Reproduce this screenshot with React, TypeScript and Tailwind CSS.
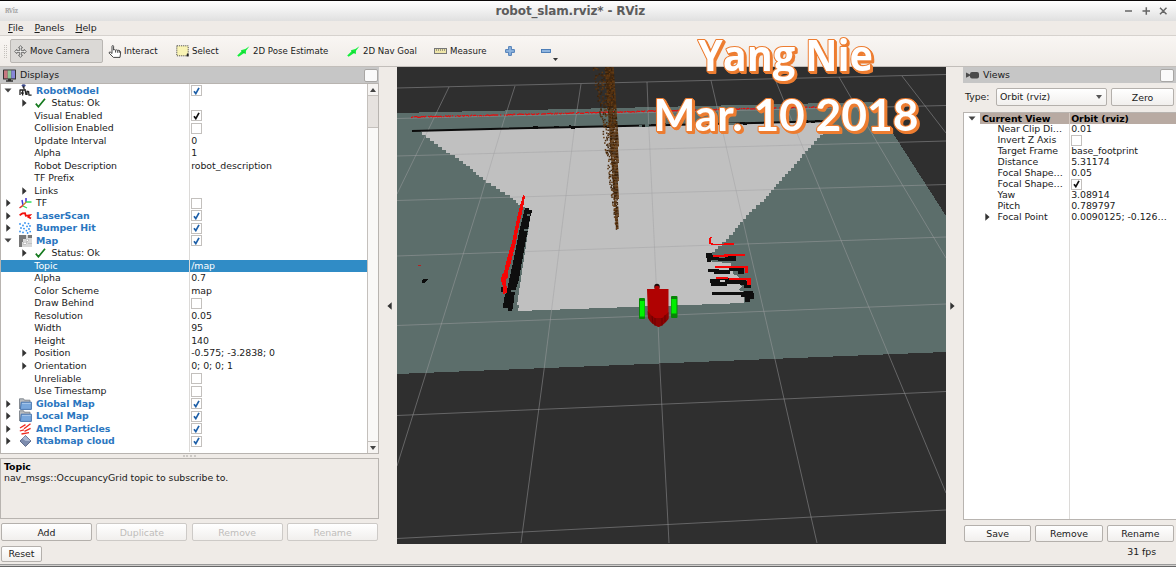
import React from "react";

type Pt = [number, number];

/* ---------- small shared pieces ---------- */

const Check = ({ on, color = "#1d5fa8" }: { on: boolean; color?: string }) => (
  <span className="flex h-[11px] w-[11px] shrink-0 items-center justify-center border border-[#c3c0bd] bg-white">
    {on && (
      <svg width="7" height="8" viewBox="0 0 7 8">
        <path d="M1 4.2 L2.8 6.6 L6 0.8" fill="none" stroke={color} strokeWidth="1.7" />
      </svg>
    )}
  </span>
);

const Right = () => (
  <svg width="5" height="8" viewBox="0 0 5 8" className="shrink-0">
    <path d="M0.3 0.3 L4.6 4 L0.3 7.7 Z" fill="#333" />
  </svg>
);

const Down = () => (
  <svg width="8" height="5" viewBox="0 0 8 5" className="shrink-0">
    <path d="M0.5 0.4 L7.5 0.4 L4 4.6 Z" fill="#444" />
  </svg>
);

const Btn = ({ label, className = "", off = false }: { label: string; className?: string; off?: boolean }) => (
  <button
    className={
      "rounded-[2px] border bg-gradient-to-b from-white to-[#f1efed] text-center leading-[15px] " +
      (off ? "border-[#cdcac7] text-[#bfbdbb] " : "border-[#b4b0ac] text-[#1a1a1a] ") +
      className
    }
  >
    {label}
  </button>
);

/* ---------- icons ---------- */

const MoveIcon = () => (
  <svg width="13" height="13" viewBox="0 0 13 13" fill="#f2f2f0" stroke="#555" strokeWidth="0.8">
    <path d="M6.5 0.6 L8.5 2.8 H7.3 V5.6 H10.2 V4.4 L12.4 6.5 L10.2 8.6 V7.4 H7.3 V10.2 H8.5 L6.5 12.4 L4.5 10.2 H5.7 V7.4 H2.8 V8.6 L0.6 6.5 L2.8 4.4 V5.6 H5.7 V2.8 H4.5 Z" />
  </svg>
);
const HandIcon = () => (
  <svg width="14" height="13" viewBox="0 0 14 13" fill="#fff" stroke="#333" strokeWidth="0.9">
    <path d="M4 8.5 V1.4 Q4 0.6 4.8 0.6 T5.6 1.4 V5 Q6.6 4.2 7.6 5.2 Q8.7 4.4 9.7 5.4 Q11 4.8 12 6 Q12.8 6.6 12.6 8 L12 12.4 H5.4 L1.2 8.2 Q0.8 6.8 2.2 7 Z" />
    <path d="M7.6 5.4 V7.6 M9.7 5.6 V7.8 M11.3 6 V7.8" />
  </svg>
);
const SelectIcon = () => (
  <svg width="14" height="12" viewBox="0 0 14 12">
    <rect x="0.8" y="0.8" width="11.4" height="10" fill="#f9f3b4" stroke="#444" strokeWidth="0.9" strokeDasharray="1.2 0.9" />
    <path d="M11 8.2 L12.6 9 V11.4 L10.4 11.2 Z" fill="#222" />
  </svg>
);
const GreenArrow = () => (
  <svg width="13" height="11" viewBox="0 0 13 11">
    <path d="M0.2 9.4 L4.6 5.2 L3.8 4.2 L8.4 3 L12.4 0.2 L9 4.8 L8.8 8.2 L7.2 7 L1.6 10.8 Z" fill="#14ee3c" />
    <path d="M4.6 5.4 L7.8 7" stroke="#10b830" strokeWidth="0.8" />
  </svg>
);
const RulerIcon = () => (
  <svg width="13" height="6" viewBox="0 0 13 6">
    <rect x="0.5" y="0.5" width="12" height="5" fill="#efe6a9" stroke="#777" />
    <path d="M2.5 1 V3 M4.5 1 V3 M6.5 1 V3 M8.5 1 V3 M10.5 1 V3" stroke="#666" strokeWidth="0.6" />
  </svg>
);
const PlusIcon = () => (
  <svg width="10" height="10" viewBox="0 0 10 10">
    <path d="M3.6 0.6 H6.4 V3.6 H9.4 V6.4 H6.4 V9.4 H3.6 V6.4 H0.6 V3.6 H3.6 Z" fill="#8fb4de" stroke="#4375b2" strokeWidth="0.9" />
  </svg>
);
const MinusIcon = () => (
  <svg width="10" height="4" viewBox="0 0 10 4">
    <rect x="0.5" y="0.5" width="9" height="3" fill="#8fb4de" stroke="#4375b2" strokeWidth="0.9" />
  </svg>
);
const MonitorIcon = () => (
  <svg width="13" height="13" viewBox="0 0 13 13">
    <rect x="0" y="0.5" width="13" height="10" rx="0.6" fill="#333" />
    <rect x="1" y="1.4" width="3.7" height="8" fill="#c67880" />
    <rect x="4.7" y="1.4" width="3.6" height="8" fill="#8fc694" />
    <rect x="8.3" y="1.4" width="3.7" height="8" fill="#8686d8" />
    <path d="M5 10 H8 V11.3 H10 V12.7 H3 V11.3 H5 Z" fill="#333" />
  </svg>
);
const CameraIcon = () => (
  <svg width="13" height="8" viewBox="0 0 13 8" fill="#4a4a4a">
    <path d="M0 1.4 L4 3.4 V4.8 L0 6.8 Z" />
    <rect x="4" y="1" width="9" height="6.4" rx="2" />
  </svg>
);
const RobotIcon = () => (
  <svg width="13" height="13" viewBox="0 0 13 13">
    <ellipse cx="4.6" cy="1.6" rx="2" ry="1.3" fill="#3c4a8c" />
    <path d="M3.6 3 L4.8 3 L5 5 M1 5.5 V11 M1 6 H6 M3.6 6 V11.5 M6 5 L7 11 M8 7 V11 M7.5 7.2 L9.6 7.6 L10 11.2 L12.6 11.2 M2 9 H5" stroke="#222" strokeWidth="1.3" fill="none" />
    <path d="M4.8 7 V9.5" stroke="#aaa" strokeWidth="0.8" />
  </svg>
);
const TfIcon = () => (
  <svg width="13" height="12" viewBox="0 0 13 12" fill="none">
    <path d="M3 3 L4 8 M7 1 V5" stroke="#4338d8" strokeWidth="1.5" />
    <path d="M7 5 H12.5 M4 9 L8 11" stroke="#2ee05a" strokeWidth="1.3" />
    <path d="M0.5 11 L4 8.4" stroke="#e0332c" strokeWidth="1.5" />
    <path d="M4 8.4 L7.2 5" stroke="#d08020" strokeWidth="1.3" />
  </svg>
);
const LaserIcon = () => (
  <svg width="13" height="9" viewBox="0 0 13 9">
    <path d="M0.6 4.2 L3.4 2.4 L6 2.2 L6.8 4.8 L11 4.2 L9.4 6 L12 7.6" stroke="#f2100c" strokeWidth="1.8" fill="none" />
  </svg>
);
const PointsIcon = () => (
  <svg width="13" height="12" viewBox="0 0 13 12" fill="#3491f0">
    {[[1, 2], [4, 3.5], [6, 1], [9.5, 1.6], [11, 4], [8, 4.4], [2, 6], [5, 6.6], [1, 9.5], [4, 10.4], [7.4, 8.6], [10, 7], [11.2, 9.6], [8.6, 11]].map(([x, y], i) => (
      <circle key={i} cx={x} cy={y} r="0.9" />
    ))}
  </svg>
);
const MapIcon = () => (
  <svg width="13" height="12" viewBox="0 0 13 12" shapeRendering="crispEdges">
    <rect width="13" height="12" fill="#d8d8d8" />
    <path d="M0 0 H7 V4 H4 V7 H3 V12 H0 Z M9 0 H13 V3 H9 Z" fill="#777" />
    <path d="M7 4 H9 V6 H7 Z M4 7 H7 V9 H4 Z M9 8 H13" fill="#fff" stroke="#aaa" strokeWidth="0.5" />
  </svg>
);
const FolderIcon = () => (
  <svg width="13" height="12" viewBox="0 0 13 12">
    <path d="M0.5 11 V0.8 H4.6 L5.4 2.2 H11 V4" fill="#b9bcc0" stroke="#7c828a" strokeWidth="0.9" />
    <path d="M2.2 4.2 H12.4 V11.4 H1.4 Z" fill="#79a7dc" stroke="#3f6da8" strokeWidth="0.9" />
    <path d="M3 5.4 H11.8" stroke="#b7d2f0" strokeWidth="0.8" />
  </svg>
);
const ParticlesIcon = () => (
  <svg width="13" height="12" viewBox="0 0 13 12" stroke="#ee2a20" strokeWidth="1.3">
    <path d="M1 5 L6.5 1.6 M5 5.8 L11.5 0.8 M0.8 8 L5 6.8 M5.5 8.4 L11.6 5.4 M2.5 11 L10 9.6" />
  </svg>
);
const CubeIcon = () => (
  <svg width="13" height="12" viewBox="0 0 13 12">
    <path d="M6.5 0.5 L12 6 L6.5 11.5 L1 6 Z" fill="#7c8cae" stroke="#4b5878" strokeWidth="0.8" />
    <path d="M6.5 0.8 L11.5 6 H6.5 L3.5 3.6 Z" fill="#a9b5d0" />
  </svg>
);

/* ---------- displays tree ---------- */

type Row = {
  label: string;
  kind: "root" | "status" | "prop" | "group";
  open?: boolean;
  icon?: React.ReactNode;
  value?: string;
  check?: boolean;
  plain?: boolean;
  selected?: boolean;
};

const rows: Row[] = [
  { label: "RobotModel", kind: "root", open: true, icon: <RobotIcon />, check: true },
  { label: "Status: Ok", kind: "status" },
  { label: "Visual Enabled", kind: "prop", check: true },
  { label: "Collision Enabled", kind: "prop", check: false },
  { label: "Update Interval", kind: "prop", value: "0" },
  { label: "Alpha", kind: "prop", value: "1" },
  { label: "Robot Description", kind: "prop", value: "robot_description" },
  { label: "TF Prefix", kind: "prop" },
  { label: "Links", kind: "group" },
  { label: "TF", kind: "root", icon: <TfIcon />, check: false, plain: true },
  { label: "LaserScan", kind: "root", icon: <LaserIcon />, check: true },
  { label: "Bumper Hit", kind: "root", icon: <PointsIcon />, check: true },
  { label: "Map", kind: "root", open: true, icon: <MapIcon />, check: true },
  { label: "Status: Ok", kind: "status" },
  { label: "Topic", kind: "prop", value: "/map", selected: true },
  { label: "Alpha", kind: "prop", value: "0.7" },
  { label: "Color Scheme", kind: "prop", value: "map" },
  { label: "Draw Behind", kind: "prop", check: false },
  { label: "Resolution", kind: "prop", value: "0.05" },
  { label: "Width", kind: "prop", value: "95" },
  { label: "Height", kind: "prop", value: "140" },
  { label: "Position", kind: "group", value: "-0.575; -3.2838; 0" },
  { label: "Orientation", kind: "group", value: "0; 0; 0; 1" },
  { label: "Unreliable", kind: "prop", check: false },
  { label: "Use Timestamp", kind: "prop", check: false },
  { label: "Global Map", kind: "root", icon: <FolderIcon />, check: true },
  { label: "Local Map", kind: "root", icon: <FolderIcon />, check: true },
  { label: "Amcl Particles", kind: "root", icon: <ParticlesIcon />, check: true },
  { label: "Rtabmap cloud", kind: "root", icon: <CubeIcon />, check: true },
];

const TreeRow = ({ r }: { r: Row }) => (
  <div className={"flex h-[12.52px] items-center " + (r.selected ? "bg-[#308cc6] text-white" : "text-[#1a1a1a]")}>
    <div className="flex h-full w-[189px] items-center border-r border-[#dcdad8]">
      {r.kind === "root" && (
        <>
          <span className="flex w-[18px] pl-[3px]">{r.open ? <Down /> : <span className="pl-[2px]"><Right /></span>}</span>
          <span className="flex w-[17px] items-center">{r.icon}</span>
          <span className={r.plain ? "" : "font-bold text-[#2a76c0]"}>{r.label}</span>
        </>
      )}
      {r.kind === "status" && (
        <>
          <span className="flex w-[34px] pl-[21px]"><Right /></span>
          <span className="w-[16.5px]">
            <svg width="11" height="10" viewBox="0 0 11 10">
              <path d="M0.8 5.6 L3.4 8.8 L10 0.8" fill="none" stroke="#157a1e" strokeWidth="1.7" />
            </svg>
          </span>
          <span>{r.label}</span>
        </>
      )}
      {r.kind === "group" && (
        <>
          <span className="flex w-[33.3px] pl-[21px]"><Right /></span>
          <span>{r.label}</span>
        </>
      )}
      {r.kind === "prop" && <span className="pl-[33.3px]">{r.label}</span>}
    </div>
    <div className="flex items-center whitespace-nowrap pl-[1.2px]">
      {r.check !== undefined && <Check on={r.check} color={r.kind === "root" ? "#1d5fa8" : "#111"} />}
      {r.value}
    </div>
  </div>
);

/* ---------- views tree ---------- */

const views: { label: string; value?: string; check?: boolean; arrow?: boolean }[] = [
  { label: "Near Clip Di…", value: "0.01" },
  { label: "Invert Z Axis", check: false },
  { label: "Target Frame", value: "base_footprint" },
  { label: "Distance", value: "5.31174" },
  { label: "Focal Shape…", value: "0.05" },
  { label: "Focal Shape…", check: true },
  { label: "Yaw", value: "3.08914" },
  { label: "Pitch", value: "0.789797" },
  { label: "Focal Point", value: "0.0090125; -0.126…", arrow: true },
];

/* ---------- 3D scene ---------- */

const rng = (seed: number) => () => {
  seed = (seed * 1664525 + 1013904223) % 4294967296;
  return seed / 4294967296;
};

const stairs = (pts: Pt[], step: number): Pt[] => {
  const out: Pt[] = [];
  for (let i = 0; i < pts.length - 1; i++) {
    const [x0, y0] = pts[i];
    const [x1, y1] = pts[i + 1];
    const n = Math.max(1, Math.round(Math.abs(y1 - y0) / step));
    for (let k = 0; k < n; k++) {
      const xa = x0 + ((x1 - x0) * k) / n;
      const xb = x0 + ((x1 - x0) * (k + 1)) / n;
      const y = y0 + ((y1 - y0) * k) / n;
      out.push([xa, y], [xb, y]);
    }
  }
  out.push(pts[pts.length - 1]);
  return out;
};

const toPoints = (p: Pt[]) => p.map(([x, y]) => `${x.toFixed(1)},${y.toFixed(1)}`).join(" ");

const freeSpace: Pt[] = [
  [420, 131],
  [832, 122],
  ...stairs([[826, 131], [823, 135], [808, 151], [791, 171], [776, 187], [764, 202], [752, 212], [740, 225], [733, 235], [718, 249], [709, 257]], 3.2),
  [712, 262],
  [731, 263],
  [733, 274],
  [738, 276],
  [742, 287],
  [738, 290],
  [744, 292],
  [744, 303],
  [518, 311],
  [519, 305],
  [517, 305],
  [531, 212],
  ...stairs([[521, 205], [510, 195], [486, 180], [463, 161], [442, 147], [422, 132]], 2.8),
];

const gridLines: Pt[][] = [
  [[397, 88], [664, 81.5], [946, 74.5]],
  [[397, 118.5], [946, 105.5]],
  [[397, 156], [672, 148.5], [946, 141]],
  [[397, 200.5], [672, 192.5], [946, 184.5]],
  [[397, 256], [672, 246.5], [946, 237]],
  [[397, 325.5], [672, 315], [946, 304]],
  [[397, 415.5], [784, 399], [946, 391.5]],
  [[397, 538.5], [784, 518.5], [946, 510]],
  [[449, 87], [433, 120], [397, 194]],
  [[515, 86], [504, 120], [481, 197], [427, 370], [397, 466]],
  [[581, 84], [575.5, 120], [544, 370], [521, 543]],
  [[647, 82], [648.5, 120], [657, 300], [660, 370], [669, 543]],
  [[711, 80.5], [724, 137], [748, 243], [777, 368], [817, 543]],
  [[775, 79], [799, 138], [843, 245], [895, 370], [946, 493]],
  [[839, 77], [871, 132], [903, 186], [946, 258]],
  [[902, 76], [946, 133]],
];

const Scene = () => {
  const r = rng(7);
  const cloud: { x: number; y: number; c: string }[] = [];
  const tones = ["#59330f", "#48290d", "#643b12", "#3a220b"];
  for (let y = 67; y < 229; y += 1.5) {
    const t = (y - 67) / 162;
    const right = y < 130 ? 613 + (y - 67) * 0.07 : 617.5;
    const solid = 605 + t * 11;
    const left = y < 120 ? 592 + (y - 67) * 0.16 : 600.5 + ((y - 120) / 108) * 15;
    for (let x = left; x < solid; x += 1.6)
      if (r() < 0.3 + t * 0.35) cloud.push({ x: x + r(), y: y + r(), c: tones[Math.floor(r() * 4)] });
    for (let x = solid; x < right; x += 1.2)
      if (r() < 0.96) cloud.push({ x, y, c: tones[Math.floor(r() * 4)] });
  }
  const scan: Pt[] = [];
  for (let x = 411; x < 830; x += 1) {
    if (r() < 0.8) scan.push([x, 116.6 - ((x - 411) / 419) * 10.4 + (r() - 0.5) * 1]);
  }
  const wall: { x: number; y: number; w: number; h: number }[] = [];
  for (let i = 0; i < 26; i++) {
    const x = 500 + r() * 335;
    wall.push({ x, y: 130.5 - ((x - 412) / 420) * 10 - r() * 1.5, w: 2 + r() * 4, h: 2.2 });
  }
  return (
    <svg width="549" height="477" viewBox="397 67 549 477" className="block" shapeRendering="crispEdges">
      <rect x="397" y="67" width="549" height="477" fill="#2f2f2f" />
      <polygon points="397,113 873,102 946,216 946,352 397,374" fill="#5c6e6b" />
      <polygon points={toPoints(freeSpace)} fill="#c0c0c0" />
      <g shapeRendering="auto" fill="none" stroke="#a0a0a4" strokeOpacity="0.48" strokeWidth="1">
        {gridLines.map((l, i) => (
          <polyline key={i} points={toPoints(l)} />
        ))}
      </g>

      <path d="M412 131 L500 128.8 L670 125 L832 121" stroke="#0c0c0c" strokeWidth="2" fill="none" shapeRendering="auto" />
      {wall.map((w, i) => (
        <rect key={i} x={w.x} y={w.y} width={w.w} height={w.h} fill={i % 5 === 4 ? "#5c6e6b" : "#0c0c0c"} />
      ))}
      <g shapeRendering="auto">
        {scan.map(([x, y], i) => (
          <rect key={i} x={x} y={y} width="1.3" height="1.1" fill="#f00808" />
        ))}
      </g>

      <polygon points="525,208 529,208 529,210 532,210 532,213 531,213 528,230 524,250 519,279 516,289 515,291 513,307 512,311 508,311 508,308 503,308 504,299 507,290 514,258 519,232" fill="#0e0e0e" />
      <rect x="501" y="287" width="4" height="5" fill="#0e0e0e" />
      <path d="M524 230 H528 M511 291 H515 M527 214.5 H530" stroke="#5c6e6b" strokeWidth="2" />
      <polygon points="523,195 525,196 524,203 521,217 518,230 516,242 511,262 508,272 508,277 506,279 507,293 503,294 503,286 501,280 502,275 504,272 507,259 512,242 515,228 518,214" fill="#f50505" />
      <rect x="418" y="265" width="3" height="1" fill="#b82020" />
      <path d="M422 280 L424 279 H428.5 L427 281 L425 282.5 H422.5 Z" fill="#0c0c0c" />

      <g fill="#0e0e0e">
        <path d="M706 253 H712 V255 H719 V258 H725 V256 H736 V261 H718 V260 H711 V262 H707 Z" />
        <path d="M708 269 H719 V270 H729 V268 H738 V267 H744 V274 H738 V271 H730 V274 H714 V272 H708 Z" />
        <path d="M710 279 H726 V278 H746 V281 H751 V288 H744 V285 H740 V284 H727 V286 H711 Z" />
        <path d="M712 292 H744 V291 H753 V293 H754 V299 H750 V302 H745 V297 H741 V295 H712 Z" />
      </g>
      <rect x="720" y="279.5" width="5" height="2.5" fill="#c8c8c8" />
      <g fill="none" stroke="#f80404" strokeWidth="2">
        <path d="M711.5 237 L710 239 V243 L713 244.5 H723 L726 244 H734" strokeWidth="1.7" />
        <path d="M713 256 H728 M724 255.3 H745" strokeWidth="1.8" />
        <path d="M715 267 H729 M729 266.5 H748" />
        <path d="M746.5 266 V273" strokeWidth="3.5" />
        <path d="M716 278.3 H728 M729 278.6 H750" strokeWidth="1.8" />
        <path d="M749 278 V285" strokeWidth="4" />
      </g>

      <g shapeRendering="auto">
        {cloud.map((p, i) => (
          <rect key={i} x={p.x} y={p.y} width="1.5" height="1.5" fill={p.c} />
        ))}
      </g>

      <g shapeRendering="auto">
        <rect x="639" y="298" width="6" height="21" rx="1" fill="#068a06" />
        <rect x="640" y="301" width="4.5" height="15.5" fill="#00f400" />
        <rect x="671" y="296" width="6.5" height="22" rx="1" fill="#078507" />
        <rect x="671.5" y="299" width="5" height="14.5" fill="#00ee00" />
        <circle cx="657" cy="286.5" r="2.7" fill="#1a0a0a" />
        <path d="M647 289 H654.5 V287 Q657 284.5 659.5 287 V289 H668.5 V318 Q664 325 658.5 327 Q651 324 648 317 Z" fill="#b00202" />
        <path d="M647.6 311 Q651 316 655 318 H662 Q666 315 668.5 312 V319 Q664 325 658.5 327 Q651 324 648 318 Z" fill="#8c0202" />
        <path d="M652 316 L653 324 M655 318 V326 M662 318 V326 M665 315 V322" stroke="#5c0101" strokeWidth="0.7" />
      </g>
    </svg>
  );
};

const Caption = () => (
  <svg
    className="absolute left-[640px] top-[26px] [filter:drop-shadow(1px_1px_0_#ed7d31)_drop-shadow(1.5px_1.5px_0_#ed7d31)]"
    width="300"
    height="124"
    viewBox="640 26 300 124"
  >
    <g fill="#ffffff" stroke="#ed7d31" strokeWidth="2.2" strokeLinejoin="round" paintOrder="stroke" fontWeight="700">
      <text x="698" y="71" fontFamily="Open Sans" fontSize="43.5" textLength="175" lengthAdjust="spacingAndGlyphs">Yang Nie</text>
      <text x="653.5" y="131" fontFamily="Lato" fontSize="43.5" textLength="265" lengthAdjust="spacingAndGlyphs">Mar. 10 2018</text>
    </g>
  </svg>
);

const Grip = () => <span className="h-[13px] w-[3px] border-x border-dotted border-[#c4c0bc]" />;

/* ---------- window ---------- */

export default function App() {
  return (
    <div className="relative flex h-[567px] w-[1176px] flex-col overflow-hidden bg-[#efebe7] font-['DejaVu_Sans',sans-serif] text-[9.4px] leading-[12px] tracking-[-0.05px] text-[#1a1a1a]">
      <div className="h-px shrink-0 bg-[#0b0808]" />
      <header className="flex h-[20px] shrink-0 items-center bg-gradient-to-b from-white to-[#e0e0e0] pl-[5px] pr-[8px]">
        <span className="w-[490.5px] font-serif text-[7px] font-bold tracking-tighter text-[#a5a5a5]">RViz</span>
        <span className="flex-1 text-[12px] font-bold tracking-[-0.15px] text-[#5c5c5c]">robot_slam.rviz* - RViz</span>
        <svg width="44" height="10" viewBox="0 0 44 10" stroke="#666" strokeWidth="1.5">
          <path d="M1 5 H8 M18.5 5 H26 M22.3 1.2 V8.8 M36 1.8 L42.5 8.2 M42.5 1.8 L36 8.2" />
        </svg>
      </header>
      <nav className="flex h-[14px] shrink-0 items-center gap-[11px] pl-[8px]">
        <span><u>F</u>ile</span>
        <span><u>P</u>anels</span>
        <span><u>H</u>elp</span>
      </nav>
      <div className="flex h-[32px] shrink-0 items-center border-y border-b-[#c2beba] border-t-[#d6d2ce] bg-gradient-to-b from-[#f9f6f3] to-[#efebe7] text-[8.6px] tracking-normal">
        <div className="flex w-[10px] pl-[4px]"><Grip /></div>
        <div className="flex h-[24px] w-[93px] items-center gap-[3px] rounded-[2px] border border-[#b9b6b2] bg-[#dbd9d6] pl-[3px]"><MoveIcon />Move Camera</div>
        <div className="flex w-[73px] items-center gap-[2px] pl-[5px]"><HandIcon />Interact</div>
        <div className="flex w-[61px] items-center gap-[2px]"><SelectIcon />Select</div>
        <div className="flex w-[110px] items-center gap-[3px]"><GreenArrow />2D Pose Estimate</div>
        <div className="flex w-[87px] items-center gap-[3px]"><GreenArrow />2D Nav Goal</div>
        <div className="flex w-[71px] items-center gap-[3px]"><RulerIcon />Measure</div>
        <div className="flex w-[36px]"><PlusIcon /></div>
        <div className="flex w-[12px]"><MinusIcon /></div>
        <svg width="5" height="3" viewBox="0 0 5 3" className="mt-[16px]"><path d="M0 0 H5 L2.5 3 Z" fill="#333" /></svg>
      </div>

      <main className="flex h-[477px] shrink-0">
        <section className="flex w-[379px] flex-col">
          <div className="flex h-[16px] items-center justify-between bg-[#c6c6c6] pl-[3px] pr-[1px]">
            <span className="flex items-center gap-[4px]"><MonitorIcon />Displays</span>
            <span className="h-[13px] w-[14px] rounded-[2px] border border-[#a8a6a4] bg-[#fafafa]" />
          </div>
          <div className="flex h-[371px] border border-[#b8b4b0] bg-white">
            <div className="min-w-0 flex-1">
              <div className="h-[0.4px] w-[189px] border-r border-[#dcdad8]" />
              {rows.map((r, i) => (
                <TreeRow key={i} r={r} />
              ))}
              <div className="h-[5px] w-[189px] border-r border-[#dcdad8]" />
            </div>
            <div className="flex w-[11px] flex-col border-l border-[#c4c0bc] bg-[#f9f8f7]">
              <div className="flex h-[11px] items-center justify-center bg-[#f6f4f2]"><svg width="6" height="4" viewBox="0 0 6 4"><path d="M0 4 H6 L3 0 Z" fill="#444" /></svg></div>
              <div className="h-[33px] border-y border-[#c4c0bc] bg-[#e6e2df]" />
              <div className="flex-1" />
              <div className="flex h-[12px] items-center justify-center border-t border-[#c4c0bc] bg-[#f6f4f2]"><svg width="6" height="4" viewBox="0 0 6 4"><path d="M0 0 H6 L3 4 Z" fill="#444" /></svg></div>
            </div>
          </div>
          <div className="flex h-[4px] items-center justify-center"><span className="w-[13px] border-t-2 border-dotted border-[#cdc9c5]" /></div>
          <div className="h-[61px] border border-[#b8b4b0] pl-[3px] pt-[2px] leading-[11px]">
            <div className="font-bold text-black">Topic</div>
            <div>nav_msgs::OccupancyGrid topic to subscribe to.</div>
          </div>
          <div className="flex gap-[4.5px] pl-[1px] pr-[1px] pt-[4px]">
            <Btn label="Add" className="h-[18px] flex-1" />
            <Btn label="Duplicate" className="h-[18px] flex-1" off />
            <Btn label="Remove" className="h-[18px] flex-1" off />
            <Btn label="Rename" className="h-[18px] flex-1" off />
          </div>
        </section>

        <div className="flex w-[18px] items-center pl-[8px]">
          <svg width="5" height="8" viewBox="0 0 5 8"><path d="M4.7 0.3 L0.4 4 L4.7 7.7 Z" fill="#333" /></svg>
        </div>
        <Scene />
        <div className="flex w-[17px] items-center pl-[4px]"><Right /></div>

        <section className="flex w-[213px] flex-col">
          <div className="flex h-[16px] items-center justify-between bg-[#c6c6c6] pl-[3px] pr-[2px]">
            <span className="flex items-center gap-[4px]"><CameraIcon />Views</span>
            <span className="h-[13px] w-[14px] rounded-[2px] border border-[#a8a6a4] bg-[#fafafa]" />
          </div>
          <div className="flex h-[29px] items-center pb-px pl-[2px]">
            <span className="w-[31px]">Type:</span>
            <span className="flex h-[18px] w-[111px] items-center justify-between rounded-[2px] border border-[#b4b0ac] bg-gradient-to-b from-white to-[#f1efed] pl-[3px] pr-[4px]">Orbit (rviz)<svg width="6" height="4" viewBox="0 0 6 4"><path d="M0 0 H6 L3 4 Z" fill="#555" /></svg></span>
            <Btn label="Zero" className="ml-[4px] h-[18px] w-[63px]" />
          </div>
          <div className="flex h-[408px] flex-col border-y border-l border-[#b8b4b0] bg-white">
            <div className="flex h-[11px] items-center font-bold text-black">
              <span className="flex w-[16px] pl-[4px]"><Down /></span>
              <span className="flex h-full w-[90px] items-center border-r border-[#d4c8c0] bg-[#b8aaa2] pl-[2px]">Current View</span>
              <span className="flex h-full flex-1 items-center bg-[#b8aaa2] pl-[1.2px]">Orbit (rviz)</span>
            </div>
            {views.map((v, i) => (
              <div key={i} className="flex h-[10.95px] items-center whitespace-nowrap">
                <div className="flex h-full w-[106px] items-center border-r border-[#dcdad8]">
                  <span className="flex w-[33.5px] pl-[21px]">{v.arrow && <Right />}</span>
                  {v.label}
                </div>
                <div className="pl-[1.2px]">
                  {v.check !== undefined && <Check on={v.check} color="#111" />}
                  {v.value}
                </div>
              </div>
            ))}
            <div className="w-[106px] flex-1 border-r border-[#dcdad8]" />
          </div>
          <div className="flex gap-[4px] pl-[1px] pr-[2px] pt-[5px]">
            <Btn label="Save" className="h-[17px] flex-1" />
            <Btn label="Remove" className="h-[17px] flex-1" />
            <Btn label="Rename" className="h-[17px] flex-1" />
          </div>
        </section>
      </main>

      <footer className="flex h-[20px] shrink-0 items-start justify-between pl-[1px] pr-[20px] pt-[2px]">
        <Btn label="Reset" className="h-[16px] w-[41px] !leading-[14px]" />
        <span>31 fps</span>
      </footer>
      <div className="h-[3px] shrink-0 border-t border-[#9a9a9a] bg-[#d0cecc]"><div className="mt-px h-px bg-[#666]" /></div>
      <Caption />
    </div>
  );
}
